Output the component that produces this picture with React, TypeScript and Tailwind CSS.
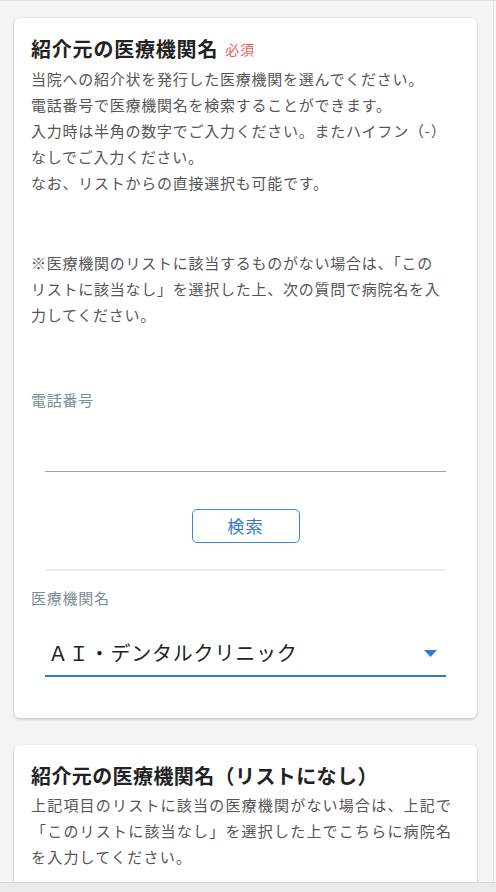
const font = { fontFamily: '"Noto Sans CJK JP", "Noto Sans", sans-serif' };

const Required = () => (
  <span className="ml-[7px] align-[2px] text-[14px] font-normal tracking-[0.05em] text-[#f25c5c]">必須</span>
);

const App = () => {
  return (
    <div className="flex h-[892px] flex-col overflow-hidden bg-[#f4f5f5]" style={font}>
      <div className="flex min-h-0 flex-1 border-t border-[#dcdcdc]">
        <main className="min-w-0 flex-1 overflow-hidden pt-[17px] pr-[16px] pl-[14px]">
          {/* 紹介元の医療機関名 */}
          <section className="rounded-[6px] bg-white px-[17px] pt-[16px] pb-[41px] shadow-[0_1px_3px_rgba(0,0,0,0.25)]">
            <h2 className="text-[20px] font-bold leading-[30px] tracking-[0.04em] text-[#222]">
              紹介元の医療機関名
              <Required />
            </h2>
            <p className="mt-[2px] text-[15px] leading-[26px] tracking-[0.05em] text-[#555]">
              当院への紹介状を発行した医療機関を選んでください。
              <br />
              電話番号で医療機関名を検索することができます。
              <br />
              入力時は半角の数字でご入力ください。またハイフン（-）
              <br />
              なしでご入力ください。
              <br />
              なお、リストからの直接選択も可能です。
            </p>
            <p className="mt-[54px] text-[15px] leading-[26px] tracking-[0.05em] text-[#555]">
              ※医療機関のリストに該当するものがない場合は、「この
              <br />
              リストに該当なし」を選択した上、次の質問で病院名を入
              <br />
              力してください。
            </p>

            <label className="mt-[61px] block text-[15px] leading-[22px] tracking-[0.05em] text-[#7b8b99]">電話番号</label>
            <div className="px-[14px]">
              <input
                type="tel"
                className="block h-[61px] w-full border-b border-[#a3a3a3] bg-transparent px-[3px] text-[18px] outline-none"
              />
              <div className="flex justify-center pt-[37px] pb-[26px]">
                <button className="h-[34px] w-[108px] rounded-[5px] border border-[#3a84e0] bg-white text-[17px] tracking-[0.08em] text-[#2f7ad9]">
                  検索
                </button>
              </div>
              <div className="h-[2px] bg-[#ececec]" />
            </div>

            <label className="mt-[16px] block text-[15px] leading-[22px] tracking-[0.05em] text-[#7b8b99]">医療機関名</label>
            <div className="px-[14px]">
              <div className="flex h-[68px] items-end border-b-2 border-[#2c79d6] pb-[6px] pl-[3px] pr-[9px]">
                <span className="flex-1 text-[20px] leading-[32px] tracking-[0.04em] text-[#222]">ＡＩ・デンタルクリニック</span>
                <svg width="13" height="7" viewBox="0 0 13 7" className="mb-[12px]">
                  <path d="M0 0h13L6.5 7z" fill="#2c79d6" />
                </svg>
              </div>
            </div>
          </section>

          {/* 紹介元の医療機関名（リストになし） */}
          <section className="mt-[27px] rounded-[6px] bg-white px-[17px] pt-[16px] pb-[20px] shadow-[0_1px_3px_rgba(0,0,0,0.25)]">
            <h2 className="text-[20px] font-bold leading-[30px] tracking-[0.02em] text-[#222]">紹介元の医療機関名（リストになし）</h2>
            <p className="mt-[1px] text-[15px] leading-[26px] tracking-[0.08em] text-[#555]">
              上記項目のリストに該当の医療機関がない場合は、上記で
              <br />
              「このリストに該当なし」を選択した上でこちらに病院名
              <br />
              を入力してください。
            </p>
          </section>
        </main>
        <div className="w-[3px] border-l border-[#e3e3e3] bg-[#f8f8f8]" />
      </div>
      <div className="h-[10px] shrink-0 border-t border-[#d6d6d6] bg-[#ebebeb]" />
    </div>
  );
};

export default App;
